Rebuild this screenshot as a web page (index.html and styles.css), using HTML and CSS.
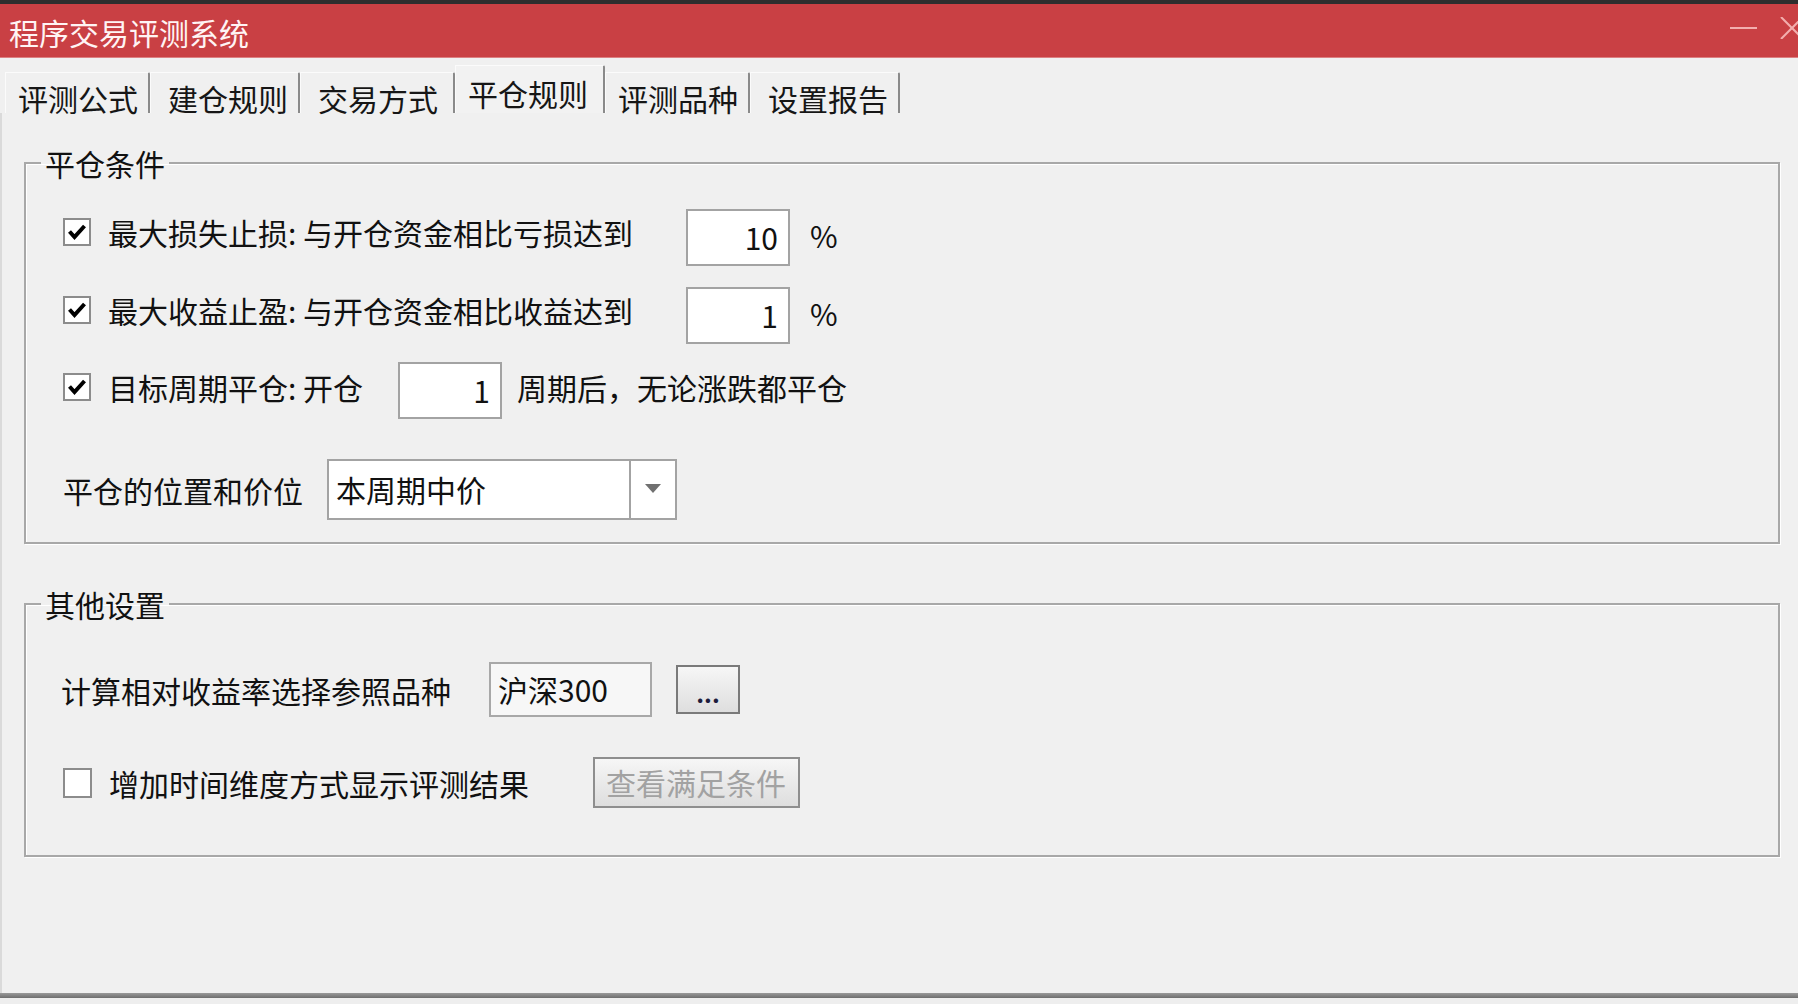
FILE: index.html
```html
<!DOCTYPE html>
<html lang="zh-CN">
<head>
<meta charset="utf-8">
<title>程序交易评测系统</title>
<link rel="stylesheet" href="styles.css">
</head>
<body>
<div class="window">
  <div class="topstrip"></div>
  <div class="titlebar">
    <span class="title">程序交易评测系统</span>
    <div class="controls">
      <svg class="min" width="27" height="22" viewBox="0 0 27 22"><line x1="0" y1="11" x2="27" y2="11" stroke="#f3aeae" stroke-width="2"/></svg>
      <svg class="close" width="24" height="22" viewBox="0 0 24 22"><line x1="1" y1="0" x2="23" y2="22" stroke="#f3aeae" stroke-width="2"/><line x1="23" y1="0" x2="1" y2="22" stroke="#f3aeae" stroke-width="2"/></svg>
    </div>
  </div>
  <div class="tabs">
    <div class="tab t1">评测公式</div>
    <div class="tab t2">建仓规则</div>
    <div class="tab t3">交易方式</div>
    <div class="tab t4 sel">平仓规则</div>
    <div class="tab t5">评测品种</div>
    <div class="tab t6">设置报告</div>
  </div>
  <div class="page">
    <fieldset class="group g1">
      <legend>平仓条件</legend>
      <div class="gbody b1">
        <div class="row r1">
          <div class="checklabel lift6">
            <svg class="cb" width="28" height="28" viewBox="0 0 28 28"><rect x="1" y="1" width="26" height="26" fill="#fff" stroke="#8c8c8c" stroke-width="2"/><path d="M6.5 13.5 L11.5 19 L21.5 8" fill="none" stroke="#000" stroke-width="4"/></svg>
            <span class="lbl w578">最大损失止损: 与开仓资金相比亏损达到</span>
          </div>
          <div class="num">10</div>
          <span class="pct">%</span>
        </div>
        <div class="row r2">
          <div class="checklabel lift6">
            <svg class="cb" width="28" height="28" viewBox="0 0 28 28"><rect x="1" y="1" width="26" height="26" fill="#fff" stroke="#8c8c8c" stroke-width="2"/><path d="M6.5 13.5 L11.5 19 L21.5 8" fill="none" stroke="#000" stroke-width="4"/></svg>
            <span class="lbl w578">最大收益止盈: 与开仓资金相比收益达到</span>
          </div>
          <div class="num">1</div>
          <span class="pct">%</span>
        </div>
        <div class="row r3">
          <div class="checklabel lift4">
            <svg class="cb" width="28" height="28" viewBox="0 0 28 28"><rect x="1" y="1" width="26" height="26" fill="#fff" stroke="#8c8c8c" stroke-width="2"/><path d="M6.5 13.5 L11.5 19 L21.5 8" fill="none" stroke="#000" stroke-width="4"/></svg>
            <span class="lbl w290">目标周期平仓: 开仓</span>
          </div>
          <div class="num">1</div>
          <span class="after lift4">周期后，无论涨跌都平仓</span>
        </div>
        <div class="row r4">
          <span class="lbl w264">平仓的位置和价位</span>
          <div class="select">
            <span class="selval">本周期中价</span>
            <span class="selbtn"><svg width="16" height="9" viewBox="0 0 16 9"><path d="M0 0 L16 0 L8 9 Z" fill="#707070"/></svg></span>
          </div>
        </div>
      </div>
    </fieldset>
    <fieldset class="group g2">
      <legend>其他设置</legend>
      <div class="gbody b2">
        <div class="row ra">
          <span class="lbl w428">计算相对收益率选择参照品种</span>
          <div class="textbox">沪深300</div>
          <div class="btn dots">...</div>
        </div>
        <div class="row rb">
          <div class="checklabel">
            <svg class="cb" width="29" height="30" viewBox="0 0 29 30"><rect x="1" y="1" width="27" height="28" fill="#fff" stroke="#8c8c8c" stroke-width="2"/></svg>
            <span class="lbl w484">增加时间维度方式显示评测结果</span>
          </div>
          <div class="btn disabled">查看满足条件</div>
        </div>
      </div>
    </fieldset>
  </div>
  <div class="bottomline"></div>
  <div class="bottomgap"></div>
</div>
</body>
</html>
```

FILE: styles.css
```css
html, body {
  margin: 0;
  padding: 0;
  background: #f0f0f0;
}
body {
  width: 1798px;
  height: 1004px;
  overflow: hidden;
  font-family: "Noto Sans CJK SC", "Microsoft YaHei", sans-serif;
  font-size: 30px;
  color: #111;
}
.window {
  width: 1798px;
  height: 1004px;
  display: flex;
  flex-direction: column;
  overflow: hidden;
}
.topstrip {
  height: 4px;
  background: #2e2e2e;
  flex: none;
}
.titlebar {
  height: 53px;
  flex: none;
  background: #c94044;
  border-bottom: 1px solid #dc8082;
  display: flex;
  align-items: center;
  overflow: hidden;
}
.title {
  padding-left: 9px;
  color: #fff4f4;
  font-size: 30px;
  line-height: 34px;
  margin-top: 2px;
}
.controls {
  margin-left: auto;
  margin-right: -6px;
  align-self: flex-start;
  margin-top: 13px;
  display: flex;
  gap: 23px;
}
.controls svg { display: block; }

.tabs {
  height: 55px;
  flex: none;
  display: flex;
  align-items: flex-end;
  padding-left: 5px;
}
.tab {
  box-sizing: border-box;
  height: 41px;
  border-top: 1px solid #fbfbfb;
  border-left: 1px solid #fbfbfb;
  border-right: 2px solid #8a8a8a;
  border-top-right-radius: 2px;
  padding-left: 12px;
  display: flex;
  align-items: flex-end;
  font-size: 30px;
  line-height: 30px;
  color: #161616;
}
.t1 { width: 145px; }
.t2 { width: 150px; padding-left: 17px; }
.t3 { width: 155px; padding-left: 17px; }
.t4 { width: 150px; }
.t5 { width: 145px; }
.t6 { width: 150px; padding-left: 17px; }
.tab.sel {
  height: 48px;
  padding-bottom: 5px;
  background: #f2f2f2;
}

.page {
  flex: 1;
  border-left: 2px solid #dadada;
  padding: 0 18px 0 22px;
  display: flex;
  flex-direction: column;
}
.group {
  margin: 0;
  padding: 0;
  border: 2px solid #a8a8a8;
  box-shadow: inset 1px 1px 0 #ffffff, 1px 1px 0 #ffffff;
  min-width: 0;
}
.group legend {
  font-size: 30px;
  line-height: 34px;
  padding: 0 4px;
  margin-left: 15px;
  color: #111;
}
.g1 { margin-top: 33px; }
.g2 { margin-top: 43px; }
.gbody {
  display: flex;
  flex-direction: column;
  padding-left: 37px;
}
.b1 { padding-top: 29px; padding-bottom: 22px; }
.b2 { padding-top: 41px; padding-bottom: 47px; padding-left: 35px; }

.row {
  display: flex;
  align-items: center;
}
.r2 { margin-top: 21px; }
.r3 { margin-top: 18px; }
.r4 { margin-top: 40px; }
.rb { margin-top: 40px; padding-left: 2px; }

.checklabel {
  display: flex;
  align-items: center;
}
.lift6 { margin-bottom: 12px; }
.lift4 { margin-bottom: 8px; }
.cb {
  display: block;
  flex: none;
  margin-right: 17px;
}
.lbl {
  line-height: 34px;
  white-space: nowrap;
}
.w578 { width: 578px; }
.w290 { width: 290px; }
.w264 { width: 264px; }
.w428 { width: 428px; }
.w484 { width: 484px; }

.num {
  box-sizing: border-box;
  width: 104px;
  height: 57px;
  background: #fff;
  border: 2px solid #a3a3a3;
  text-align: right;
  padding-right: 10px;
  line-height: 53px;
  font-size: 30px;
}
.pct {
  margin-left: 20px;
  line-height: 34px;
  margin-bottom: 6px;
}
.after {
  margin-left: 15px;
  line-height: 34px;
}

.select {
  box-sizing: border-box;
  width: 350px;
  height: 61px;
  background: #fff;
  border: 2px solid #a3a3a3;
  display: flex;
}
.selval {
  flex: 1;
  padding-left: 7px;
  line-height: 57px;
}
.selbtn {
  width: 44px;
  border-left: 2px solid #a3a3a3;
  display: flex;
  align-items: center;
  justify-content: center;
}
.selbtn svg { display: block; margin-top: -2px; }

.textbox {
  box-sizing: border-box;
  width: 163px;
  height: 55px;
  background: #f7f7f7;
  border: 2px solid #a8a8a8;
  padding-left: 7px;
  line-height: 51px;
}
.btn {
  box-sizing: border-box;
  border: 2px solid #7a7a7a;
  background: linear-gradient(#f6f6f6, #dedede);
  text-align: center;
}
.dots {
  width: 64px;
  height: 49px;
  margin-left: 24px;
  font-size: 24px;
  font-weight: 700;
  line-height: 52px;
  color: #1c1c3c;
}
.disabled {
  width: 207px;
  height: 51px;
  border-color: #8e8e8e;
  color: #a2a2a2;
  line-height: 47px;
  text-align: left;
  padding-left: 11px;
}

.bottomline {
  height: 5px;
  flex: none;
  background: linear-gradient(#9a9a9a, #6e6e6e);
}
.bottomgap {
  height: 6px;
  flex: none;
  background: #eeeeee;
}
```
